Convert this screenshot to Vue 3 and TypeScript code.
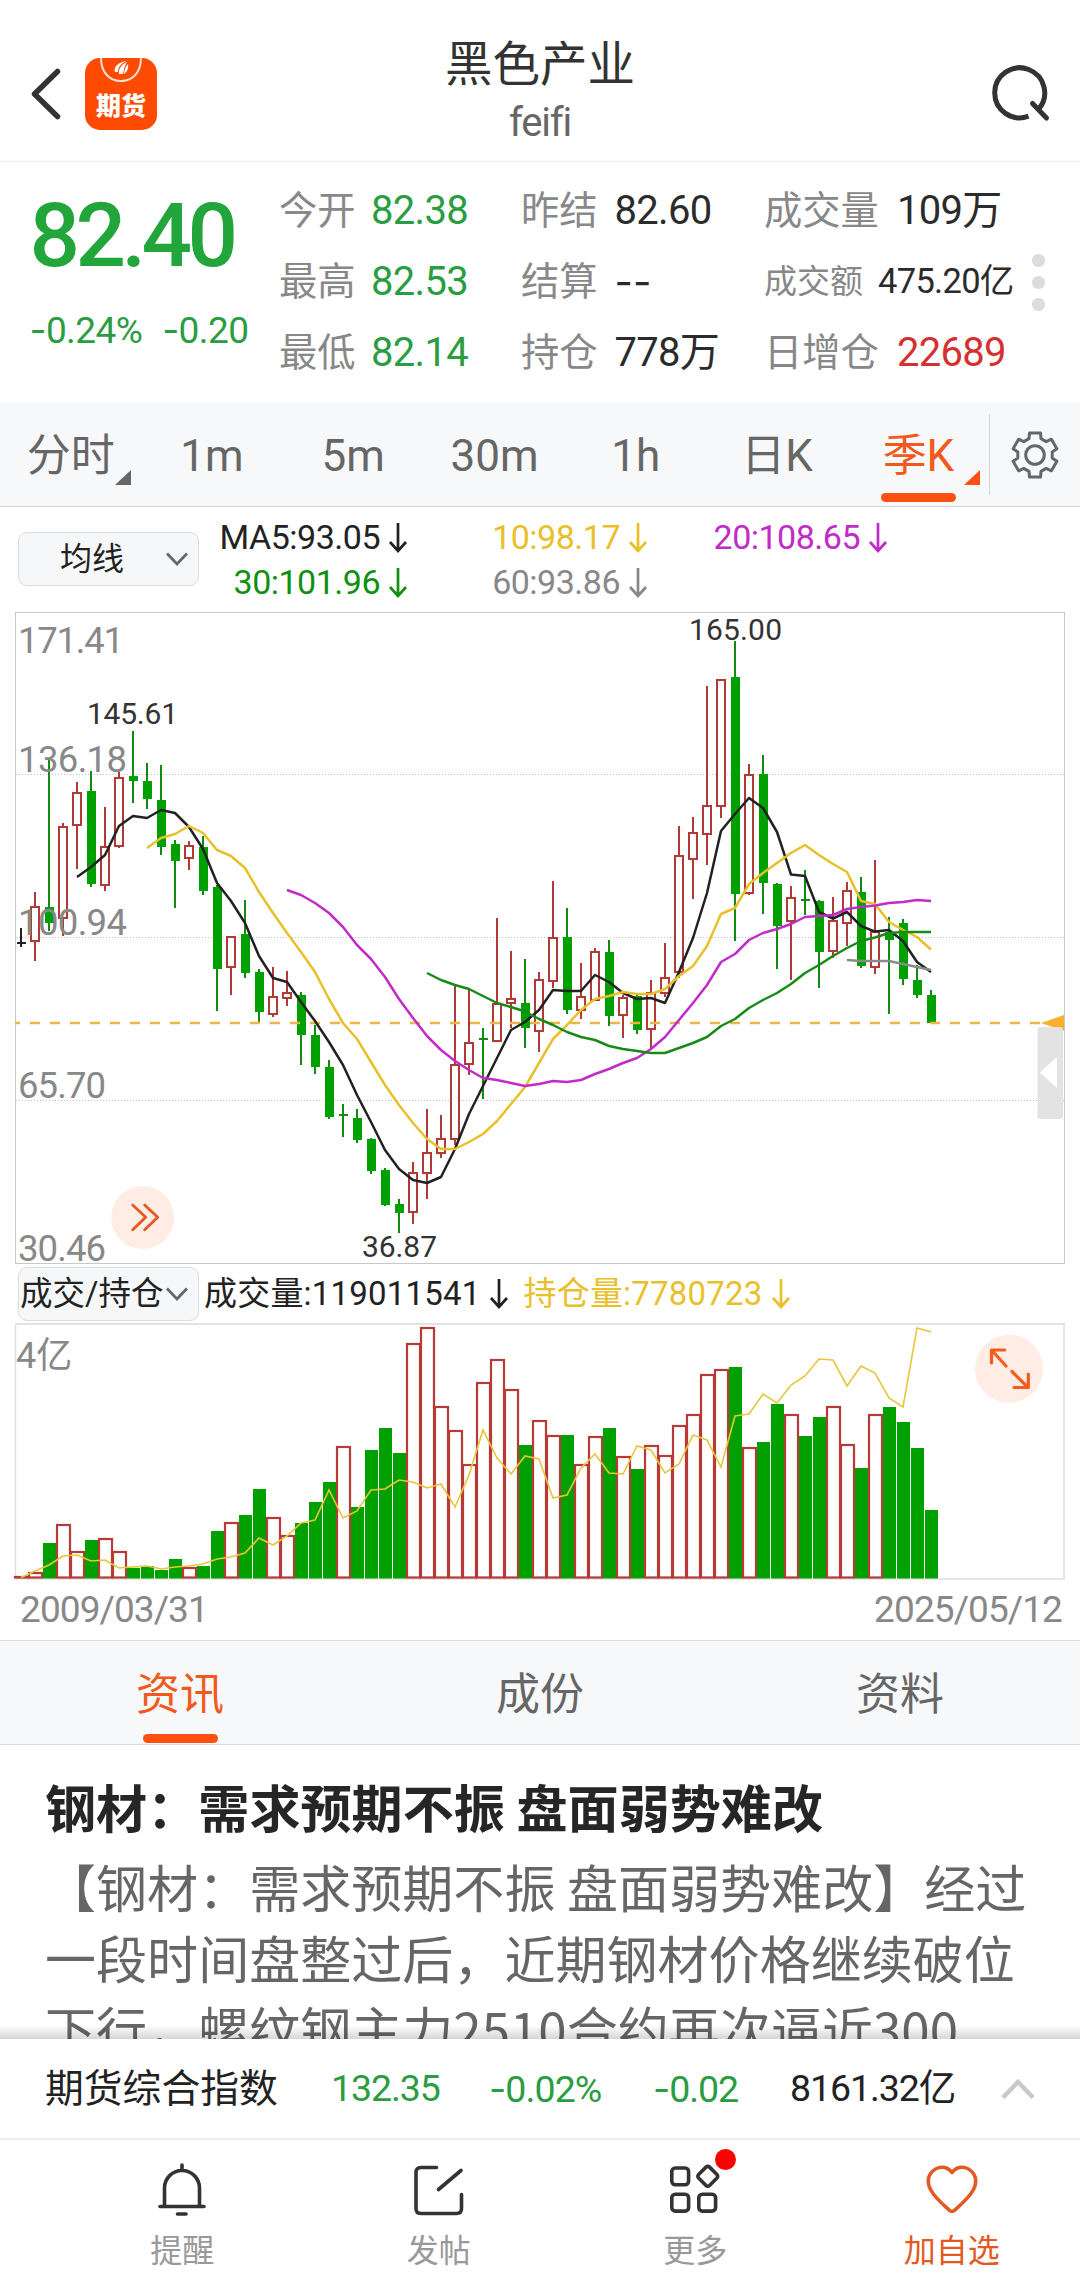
<script setup lang="ts">
type Kind = 'r' | 'g' | 'k'
type Candle = [Kind, number, number, number, number]

interface Quote { label: string; value: string; tone: string; small?: boolean }

const quotes: Quote[] = [
  { label: '今开', value: '82.38', tone: 'down' },
  { label: '昨结', value: '82.60', tone: 'flat' },
  { label: '成交量', value: '109万', tone: 'flat' },
  { label: '最高', value: '82.53', tone: 'down' },
  { label: '结算', value: '--', tone: 'flat' },
  { label: '成交额', value: '475.20亿', tone: 'flat', small: true },
  { label: '最低', value: '82.14', tone: 'down' },
  { label: '持仓', value: '778万', tone: 'flat' },
  { label: '日增仓', value: '22689', tone: 'up' },
]

const periods = ['分时', '1m', '5m', '30m', '1h', '日K', '季K']

const averages = [
  { text: 'MA5:93.05', color: '#222' },
  { text: '10:98.17', color: '#e9c02c' },
  { text: '20:108.65', color: '#c22bc8' },
  { text: '30:101.96', color: '#109010' },
  { text: '60:93.86', color: '#888' },
]

// kind, high, body top, body bottom, low (chart coordinates)
const candles: Candle[] = [
  ['k', 928, 943, 943, 947], ['r', 892, 906, 942, 961], ['g', 759, 907, 923, 931],
  ['r', 823, 826, 919, 936], ['r', 782, 792, 826, 869], ['g', 771, 791, 884, 887],
  ['r', 807, 846, 886, 891], ['r', 772, 777, 847, 848], ['g', 731, 776, 781, 803],
  ['g', 763, 781, 799, 809], ['g', 765, 800, 847, 855], ['g', 840, 844, 861, 908],
  ['r', 841, 845, 859, 870], ['g', 836, 847, 891, 895], ['g', 885, 887, 969, 1011],
  ['r', 936, 936, 968, 995], ['g', 900, 934, 973, 978], ['g', 969, 972, 1012, 1024],
  ['r', 967, 996, 1015, 1017], ['r', 971, 992, 999, 1006], ['g', 992, 995, 1035, 1065],
  ['g', 1025, 1035, 1067, 1074], ['g', 1060, 1067, 1117, 1119], ['g', 1104, 1115, 1115, 1137],
  ['g', 1109, 1118, 1140, 1143], ['g', 1138, 1139, 1171, 1174], ['g', 1168, 1170, 1205, 1206],
  ['g', 1199, 1204, 1213, 1233], ['r', 1162, 1172, 1213, 1224], ['r', 1109, 1152, 1174, 1199],
  ['r', 1115, 1138, 1154, 1158], ['r', 985, 1064, 1140, 1145], ['r', 990, 1042, 1065, 1075],
  ['g', 1028, 1039, 1039, 1099], ['r', 918, 1003, 1042, 1042], ['r', 951, 998, 1004, 1028],
  ['g', 959, 1003, 1028, 1048], ['r', 972, 979, 1032, 1052], ['r', 881, 937, 982, 988],
  ['g', 908, 937, 1010, 1014], ['r', 963, 996, 1011, 1019], ['r', 948, 951, 1001, 1001],
  ['g', 940, 952, 1016, 1026], ['r', 995, 997, 1016, 1038], ['g', 995, 996, 1030, 1034],
  ['r', 980, 992, 1030, 1048], ['r', 943, 977, 994, 997], ['r', 826, 855, 973, 978],
  ['r', 817, 832, 860, 899], ['r', 686, 805, 835, 865], ['r', 679, 679, 807, 818],
  ['g', 641, 677, 894, 941], ['r', 764, 774, 894, 895], ['g', 755, 774, 883, 914],
  ['g', 883, 884, 926, 969], ['r', 886, 897, 922, 980], ['g', 870, 900, 900, 915],
  ['g', 900, 901, 952, 988], ['r', 897, 920, 952, 958], ['r', 882, 890, 924, 946],
  ['g', 877, 892, 966, 968], ['r', 860, 931, 968, 974], ['g', 917, 932, 940, 1014],
  ['g', 919, 923, 979, 985], ['g', 965, 980, 995, 998], ['g', 990, 995, 1023, 1023],
]

const cx = (i: number) => 21 + i * 14
const toPoints = (ys: number[], start = 0) => ys.map((y, i) => `${cx(i + start)},${y}`).join(' ')

const maLines = [
  { color: '#222', points: toPoints([877, 867, 855, 826, 816, 818, 810, 813, 827, 849, 883, 901, 923, 956, 978, 982, 1002, 1021, 1042, 1065, 1095, 1122, 1150, 1169, 1180, 1183, 1177, 1149, 1114, 1086, 1058, 1030, 1022, 1010, 990, 991, 991, 975, 982, 993, 999, 998, 1003, 972, 938, 893, 831, 814, 798, 808, 832, 874.5, 876, 912, 918.5, 912, 926, 931.6, 930, 941, 962, 972], 4) },
  { color: '#e9c02c', points: toPoints([848, 838, 834, 826, 833, 850, 856, 868, 892, 913, 933, 952, 972, 999, 1023, 1039, 1062, 1085, 1105, 1123, 1139, 1149, 1149, 1142, 1134, 1121, 1104, 1087, 1063, 1039, 1025, 1010, 999, 996, 992, 994, 994, 989, 976, 966, 946, 914, 908, 884, 873, 863, 853, 845, 855, 864, 872, 901, 904, 922, 930, 937, 949.5], 9) },
  { color: '#c22bc8', points: toPoints([890, 895, 903, 913, 927, 945, 959, 977, 999, 1018, 1036, 1050, 1061, 1070, 1078, 1080, 1083, 1086, 1084, 1081, 1082, 1080, 1074, 1069, 1063, 1058, 1049, 1037, 1020, 1003, 985, 962, 954, 940, 933, 929, 924, 917, 916, 915, 909, 907, 905.5, 903, 902, 900, 901], 19) },
  { color: '#188a18', points: toPoints([973, 980, 985, 989, 996, 1003, 1007, 1011.5, 1019, 1025, 1032, 1037, 1040, 1046, 1049, 1051, 1053, 1053, 1048, 1043, 1037, 1026, 1019, 1008, 1000, 993, 984, 973, 965, 956, 948, 941, 937.5, 933, 932, 932, 932], 29) },
  { color: '#8a8a8a', points: toPoints([960, 961, 961, 961, 964, 967, 970], 59) },
]

// quarters whose volume bar is hollow although the candle body is flat
const hollowVolume = new Set([23, 33])
const volumeTops = [1576, 1572, 1543, 1524, 1551, 1540, 1538, 1551, 1568, 1566, 1570, 1559, 1567, 1566, 1531, 1522, 1515, 1489, 1517, 1535, 1523, 1502, 1482, 1446, 1507, 1450, 1428, 1453, 1343, 1327, 1406, 1430, 1464, 1382, 1359, 1389, 1445, 1420, 1435, 1435, 1464, 1436, 1428, 1456, 1469, 1445, 1455, 1425, 1414, 1374, 1369, 1367, 1447, 1442, 1404, 1414, 1436, 1417, 1406, 1444, 1468, 1414, 1407, 1422, 1448, 1510]
const volumes = volumeTops.map((top, i) => ({ top, x: cx(i), down: candles[i][0] === 'g' && !hollowVolume.has(i) }))

const interest = toPoints([1577.5, 1571, 1565, 1556, 1555, 1561, 1560, 1568, 1567, 1566, 1569, 1567, 1566, 1564, 1559, 1557, 1553, 1538, 1545, 1536, 1523, 1520, 1490, 1518, 1511, 1490, 1489, 1480, 1482, 1488, 1484, 1507, 1475, 1430, 1458, 1474, 1456, 1459, 1498, 1495, 1468, 1454, 1473, 1474, 1446, 1450, 1473, 1464, 1435, 1440, 1467, 1416, 1414, 1394, 1403, 1385, 1376, 1359, 1360, 1386, 1366, 1373, 1398, 1407, 1328, 1332])

const axisLabels = [
  { text: '171.41', y: 653, w: 106 },
  { text: '136.18', y: 772, w: 109 },
  { text: '100.94', y: 935, w: 109 },
  { text: '65.70', y: 1098, w: 88 },
  { text: '30.46', y: 1261, w: 88 },
]

const gearTeeth = (() => {
  const pts: string[] = []
  for (let i = 0; i < 6; i++) {
    const base = -90 + i * 60
    const spec: [number, number][] = [[-20, 17.5], [-14, 22.8], [14, 22.8], [20, 17.5]]
    for (const [da, r] of spec) {
      const a = ((base + da) * Math.PI) / 180
      pts.push(`${(25 + r * Math.cos(a)).toFixed(1)},${(25 + r * Math.sin(a)).toFixed(1)}`)
    }
  }
  return pts.join(' ')
})()
</script>

<template>
  <div class="page">
    <header class="top">
      <svg class="back" width="36" height="56" viewBox="0 0 36 56"><path d="M29.5 5.5 6.5 28l23 22.500" fill="none" stroke="#333" stroke-width="5.500" stroke-linecap="round" stroke-linejoin="round" /></svg>
      <svg class="logo" width="72" height="72" viewBox="0 0 72 72">
        <rect width="72" height="72" rx="15" fill="#ff4a03" />
        <path d="M16 0c0 14 8 23 20 23s20-9 20-23" fill="none" stroke="#ffe1d2" stroke-width="2" />
        <path d="M30 14c-2-5 4-10 11-11-5 3-8 6-8 11zM34 16c-1-5 3-10 8-12-3 5-3 8-4 12zM39 16c0-4 2-8 4-10 1 4-1 8-4 10z" fill="#fff" />
        <text x="36" y="57" font-size="25" font-weight="900" fill="#fff" text-anchor="middle">期货</text>
      </svg>
      <div class="titles">
        <div class="name">黑色产业</div>
        <div class="code">feifi</div>
      </div>
      <svg class="search" width="64" height="64" viewBox="0 0 64 64"><path d="M38.500 55.200A25 25 0 1 1 48.300 48.500" fill="none" stroke="#333" stroke-width="5" /><path d="M42.500 42.500 56.500 57" fill="none" stroke="#333" stroke-width="5" stroke-linecap="round" /></svg>
    </header>

    <section class="quote">
      <div class="last">
        <div class="price">82.40</div>
        <div class="change"><span><i class="dash">-</i>0.24%</span><span><i class="dash">-</i>0.20</span></div>
      </div>
      <div class="grid">
        <div v-for="q in quotes" :key="q.label" class="cell" :class="{ small: q.small }">
          <span class="label">{{ q.label }}</span><span class="value" :class="[q.tone, { dash: q.value === '--' }]">{{ q.value }}</span>
        </div>
      </div>
      <div class="dots"><b></b><b></b><b></b></div>
    </section>

    <nav class="periods">
      <div v-for="(p, i) in periods" :key="p" class="period" :class="{ active: i === 6 }">
        {{ p }}
        <svg v-if="i === 0 || i === 6" class="corner" width="16" height="15" viewBox="0 0 16 15"><path d="M16 0v15H0z" fill="currentColor" /></svg>
        <span v-if="i === 6" class="bar"></span>
      </div>
      <div class="settings">
        <svg width="50" height="50" viewBox="0 0 50 50" fill="none" stroke="#666" stroke-width="3" stroke-linejoin="round"><polygon :points="gearTeeth" /><circle cx="25" cy="25" r="9.300" /></svg>
      </div>
    </nav>

    <section class="ma">
      <div class="select"><span>均线</span><svg width="24" height="14" viewBox="0 0 24 14"><path d="M2 1.500 12 12 22 1.500" fill="none" stroke="#666" stroke-width="2.700" /></svg></div>
      <div class="mas">
        <div v-for="m in averages" :key="m.text" class="maitem" :style="{ color: m.color }">
          {{ m.text }}<svg class="arrow" width="18" height="30" viewBox="0 0 18 30"><path d="M9 0v27M1 19l8 9 8-9" fill="none" stroke="currentColor" stroke-width="2.700" /></svg>
        </div>
      </div>
    </section>

    <section class="kline">
      <svg width="1080" height="656" viewBox="0 610 1080 656">
        <rect x="15.500" y="612.500" width="1049" height="651" fill="none" stroke="#c8c8c8" />
        <g stroke="#c2c2c2" stroke-dasharray="1 2"><path d="M16 774.500H1064M16 937.500H1064M16 1100.500H1064" /></g>
        <g v-for="(c, i) in candles" :key="i">
          <template v-if="c[0] === 'r'">
            <path :d="`M${cx(i)} ${c[1]}V${c[2]}M${cx(i)} ${c[3]}V${c[4]}`" stroke="#b03a36" stroke-width="2" />
            <rect :x="cx(i) - 4" :y="c[2] + 1" width="8" :height="c[3] - c[2] - 2" fill="#fff" stroke="#b03a36" stroke-width="2" />
          </template>
          <template v-else-if="c[2] === c[3]">
            <path :d="`M${cx(i)} ${c[1]}V${c[4]}M${cx(i) - 4} ${c[2]}h9`" :stroke="c[0] === 'k' ? '#222' : '#128a12'" stroke-width="2" />
          </template>
          <template v-else>
            <path :d="`M${cx(i)} ${c[1]}V${c[4]}`" stroke="#128a12" stroke-width="2" />
            <rect :x="cx(i) - 4" :y="c[2]" width="9" :height="c[3] - c[2]" fill="#00a000" />
          </template>
        </g>
        <path d="M15 1023H1044" stroke="#eeb448" stroke-width="2.600" stroke-dasharray="10" stroke-dashoffset="5" />
        <polyline v-for="l in maLines" :key="l.color" :points="l.points" fill="none" :stroke="l.color" stroke-width="2.500" stroke-linejoin="round" />
        <text v-for="a in axisLabels" :key="a.text" x="18" :y="a.y" :textLength="a.w" font-size="36.500" fill="#888">{{ a.text }}</text>
        <g font-size="30" fill="#333">
          <text x="87" y="724" textLength="91">145.61</text>
          <text x="689" y="640" textLength="93">165.00</text>
          <text x="362" y="1257" textLength="75">36.87</text>
        </g>
        <path d="M1041 1023l23-8v16z" fill="#fbb02c" />
        <rect x="1037.500" y="1027" width="25.500" height="92" rx="3" fill="#e3e3e3" />
        <path d="M1040 1072.500l17-15.500v31z" fill="#fff" />
        <circle cx="142.700" cy="1217.500" r="31.500" fill="#ffece4" />
        <path d="M132.700 1205l13 12.300-13 12.500M144.700 1205l13 12.300-13 12.500" fill="none" stroke="#e25a22" stroke-width="2.800" stroke-linecap="round" stroke-linejoin="round" />
      </svg>
    </section>

    <section class="volhead">
      <div class="select wide"><span>成交/持仓</span><svg width="24" height="14" viewBox="0 0 24 14"><path d="M2 1.500 12 12 22 1.500" fill="none" stroke="#666" stroke-width="2.700" /></svg></div>
      <div class="vol">成交量:119011541<svg class="arrow" width="18" height="30" viewBox="0 0 18 30"><path d="M9 0v27M1 19l8 9 8-9" fill="none" stroke="currentColor" stroke-width="2.700" /></svg></div>
      <div class="vol hold">持仓量:7780723<svg class="arrow" width="18" height="30" viewBox="0 0 18 30"><path d="M9 0v27M1 19l8 9 8-9" fill="none" stroke="currentColor" stroke-width="2.700" /></svg></div>
    </section>

    <section class="volume">
      <svg width="1080" height="259" viewBox="0 1322 1080 259">
        <path d="M15.500 1324V1579M1064 1324V1579M15 1579H1065" stroke="#e0e0e0" stroke-width="1.500" />
        <path d="M15 1324H1065" stroke="#e2e2e2" stroke-width="2" />
        <g v-for="(v, i) in volumes" :key="i">
          <rect v-if="v.down" :x="v.x - 6" :y="v.top" width="13" :height="1578.500 - v.top" fill="#00a000" />
          <rect v-else :x="v.x - 6" :y="v.top + 1" width="13" :height="Math.max(1577.500 - v.top - 1, .5)" fill="#fff" stroke="#b83a36" stroke-width="2.200" />
        </g>
        <polyline :points="interest" fill="none" stroke="#e9c53a" stroke-width="1.600" />
        <text x="16" y="1368" font-size="36" fill="#888">4亿</text>
        <circle cx="1009" cy="1368.700" r="34" fill="#ffece4" />
        <path d="M1004.700 1350H991.500V1363M992 1350.500l14 15.500M1012 1371.500l15.500 15.500M1028.300 1374v13.500H1014" fill="none" stroke="#f25c1e" stroke-width="3.200" stroke-linecap="round" stroke-linejoin="round" />
      </svg>
      <div class="dates"><span>2009/03/31</span><span>2025/05/12</span></div>
    </section>

    <nav class="tabs">
      <div class="tab active">资讯<span class="bar"></span></div>
      <div class="tab">成份</div>
      <div class="tab">资料</div>
    </nav>

    <article class="news">
      <h2>钢材：需求预期不振 盘面弱势难改</h2>
      <p>【钢材：需求预期不振 盘面弱势难改】经过<br>一段时间盘整过后，近期钢材价格继续破位<br>下行，螺纹钢主力2510合约再次逼近300</p>
      <div class="fade"></div>
    </article>

    <section class="index">
      <span class="iname">期货综合指数</span>
      <span class="down i1">132.35</span>
      <span class="down i2"><i class="dash">-</i>0.02%</span>
      <span class="down i3"><i class="dash">-</i>0.02</span>
      <span class="i4">8161.32亿</span>
      <svg width="34" height="22" viewBox="0 0 34 22"><path d="M2 19.500 17 4 32 19.500" fill="none" stroke="#c8c8c8" stroke-width="4.500" /></svg>
    </section>

    <footer class="actions">
      <div class="action">
        <svg width="56" height="62" viewBox="0 0 56 62" fill="none" stroke="#333" stroke-width="3.600" stroke-linecap="round"><path d="M28 7v5M10.500 48V30a17.500 17.500 0 0 1 35 0v18M6 48.500h44" /><path d="M23.500 56h8.500" /></svg>
        <span>提醒</span>
      </div>
      <div class="action">
        <svg width="56" height="62" viewBox="0 0 56 62" fill="none" stroke="#333" stroke-width="3.600" stroke-linecap="round"><path d="M25.500 9.500H10q-5 0-5 5V50.500q0 5 5 5H45.500q5 0 5-5V36.500M50 12.500 27.500 31.500" /></svg>
        <span>发帖</span>
      </div>
      <div class="action">
        <svg width="56" height="62" viewBox="0 0 56 62" fill="none" stroke="#333" stroke-width="3.600"><rect x="4.800" y="10" width="16.800" height="16.800" rx="3.500" /><rect x="4.800" y="36.300" width="16.800" height="16.800" rx="3.500" /><rect x="31.800" y="36.300" width="16.800" height="16.800" rx="3.500" /><rect x="33" y="10.500" width="15.500" height="15.500" rx="2.500" transform="rotate(45 40.700 18.300)" /></svg>
        <b class="badge"></b>
        <span>更多</span>
      </div>
      <div class="action hot">
        <svg width="56" height="62" viewBox="0 0 56 62" fill="none" stroke="#e25a22" stroke-width="3.600" stroke-linejoin="round"><path d="M28 14.500C24 9 17.500 8 12.500 10.500 4.500 14.500 2 23 6.500 31.500 11 40 19.500 47 25.500 52.300q2.500 2 5 0C36.500 47 45 40 49.500 31.500 54 23 51.500 14.500 43.500 10.500 38.500 8 32 9 28 14.500z" /></svg>
        <span>加自选</span>
      </div>
    </footer>
  </div>
</template>

<style>
body { margin: 0; background: #fff; }
</style>

<style scoped>
.page { width: 1080px; height: 2294px; overflow: hidden; display: flex; flex-direction: column; background: #fff; color: #222; font-family: Roboto, "Noto Sans CJK SC", sans-serif; font-variant-ligatures: none; text-spacing-trim: space-all; }
.page > * { flex: none; box-sizing: border-box; }
svg { display: block; flex: none; overflow: visible; }
svg text { font-family: Roboto, "Noto Sans CJK SC", sans-serif; }
.dash { font-family: Inter, sans-serif; font-style: normal; }
.down { color: #2a9d42; }
.up { color: #d62f2f; }
.flat { color: #2b2b2b; }

.top { height: 162px; border-bottom: 1px solid #ececec; display: flex; align-items: flex-start; padding: 0 26px 0 28px; }
.back { margin-top: 66px; }
.logo { margin: 58px 0 0 21px; }
.titles { flex: 1; padding: 35px 67px 0 0; text-align: center; }
.name { font-size: 47.500px; line-height: 60px; color: #333; }
.code { font-size: 40px; line-height: 50px; color: #666; letter-spacing: -1.200px; margin-top: 3px; }
.search { margin-top: 61px; }

.quote { height: 240px; display: flex; }
.last { width: 281px; padding-left: 29.500px; box-sizing: border-box; color: #22a53a; }
.price { font-size: 89px; font-weight: 500; letter-spacing: -4.600px; line-height: 100px; margin-top: 24px; }
.change { margin-top: 19px; font-size: 37px; line-height: 50px; display: flex; gap: 20px; letter-spacing: -0.600px; color: #2a9d42; }
.grid { width: 751px; display: grid; grid-template-columns: 242px 243px 266px; grid-auto-rows: 71px; padding-top: 13px; }
.cell { display: flex; line-height: 71px; white-space: nowrap; }
.label { font-size: 38.300px; color: #888; width: 92px; margin-left: -2px; }
.cell:nth-child(3n+2) .label { width: 93.500px; }
.cell:nth-child(3n) .label { width: 133px; }
.value { font-size: 40px; letter-spacing: -0.700px; }
.cell .value.dash { font-size: 40px; letter-spacing: 0; }
.cell .label { line-height: 71px; }
.cell.small .label { font-size: 33px; width: 114px; }
.small .value { font-size: 34.500px; }
.dots { display: flex; flex-direction: column; gap: 9.500px; padding-top: 92px; }
.dots b { width: 12.500px; height: 12.500px; border-radius: 50%; background: #dcdcdc; }

.periods { height: 105px; background: #f7f8fa; border-bottom: 1px solid #d2d4d6; display: flex; }
.period { width: 141.300px; text-align: center; font-size: 44px; line-height: 109px; color: #666; position: relative; }
.period.active { color: #f2591c; }
.corner { position: absolute; left: 115px; top: 68px; }
.active .corner { left: 116px; color: #ff5012; }
.bar { position: absolute; left: 50%; bottom: 4px; width: 75px; height: 9px; margin-left: -37.500px; border-radius: 4.500px; background: #ff5012; }
.settings { margin-top: 12px; height: 81px; border-left: 1px solid #d5d7da; flex: 1; display: flex; align-items: center; justify-content: center; }

.ma { height: 103px; padding: 0 0 0 18px; display: flex; }
.select { box-sizing: border-box; width: 181px; height: 54px; margin-top: 25px; border: 1px solid #d9dce3; border-radius: 9px; background: #f6f7f9; display: flex; align-items: center; justify-content: space-between; padding: 0 9px 0 41px; font-size: 32px; line-height: 52px; white-space: nowrap; }
.select.wide { margin-top: 1px; padding-left: 1px; font-size: 32.500px; }
.mas { width: 688px; display: grid; grid-template-columns: 208px 240px 240px; grid-auto-rows: 45px; padding-top: 8px; }
.maitem { display: flex; justify-content: flex-end; align-items: center; gap: 9px; font-size: 34px; letter-spacing: -0.500px; line-height: 45px; }
.kline { height: 656px; }
.volhead { height: 56px; display: flex; padding-left: 18px; }
.vol { display: flex; align-items: center; gap: 9px; font-size: 33px; line-height: 56px; margin-left: 5px; letter-spacing: .200px; }
.vol.hold { color: #e9c02c; margin-left: 16px; }
.volume { height: 318px; }
.dates { display: flex; justify-content: space-between; padding: 0 18px 0 20px; font-size: 37px; line-height: 50px; margin-top: 4px; color: #888; letter-spacing: -0.900px; }

.tabs { height: 105px; background: #f7f8fa; border-top: 1px solid #dcdcdc; border-bottom: 1px solid #dcdcdc; display: flex; }
.tab { flex: 1; text-align: center; position: relative; font-size: 44px; line-height: 109px; color: #666; }
.tab.active { color: #f2591c; }
.tab .bar { bottom: 1px; }
.news { height: 294px; overflow: hidden; position: relative; padding-left: 45px; font-family: "Noto Sans CJK SC", sans-serif; }
.news h2 { margin: 23px 0 0; font-size: 51.100px; line-height: 76px; font-weight: 700; color: #262626; white-space: nowrap; }
.news p { margin: 7px 0 0; font-size: 51.050px; line-height: 71px; color: #666; white-space: nowrap; }
.fade { position: absolute; left: 0; right: 0; bottom: 0; height: 14px; background: linear-gradient(rgba(0, 0, 0, 0), rgba(0, 0, 0, .16)); }
.index { height: 101px; border-bottom: 2px solid #eee; display: flex; align-items: center; padding-left: 45px; font-size: 37.500px; line-height: 101px; white-space: nowrap; letter-spacing: -1.100px; }
.index .iname { width: 286px; font-size: 38.800px; letter-spacing: 0; }
.i1 { width: 158px; }
.i2 { width: 164px; letter-spacing: -.900px; }
.i3 { width: 137px; }
.i4 { width: 211px; }
.actions { height: 154px; display: flex; padding-left: 54px; }
.action { width: 256.500px; display: flex; flex-direction: column; align-items: center; position: relative; color: #999; font-size: 32px; line-height: 40px; }
.action svg { margin-top: 17.500px; }
.action span { margin-top: 11px; }
.hot { color: #e25a22; }
.badge { position: absolute; left: 148px; top: 9px; width: 21px; height: 21px; border-radius: 50%; background: #f00; }
</style>
